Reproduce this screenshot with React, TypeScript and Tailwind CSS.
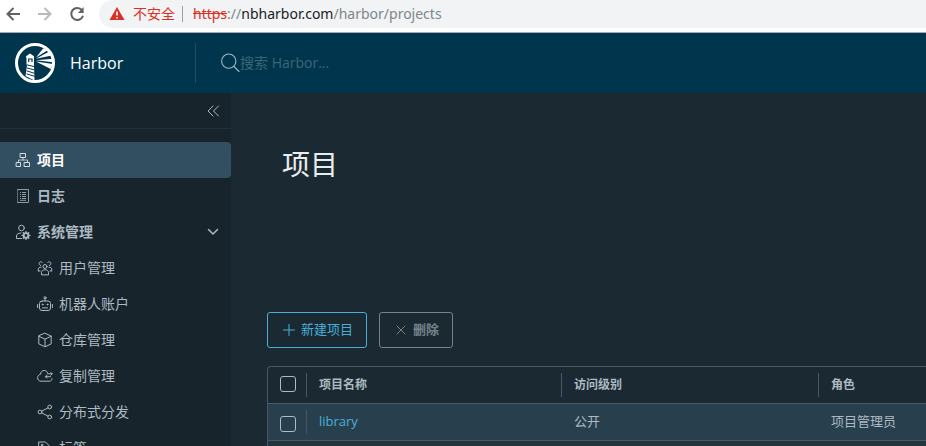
import { useState, type ReactNode } from "react";
import clsx from "clsx";

interface IconProps {
  className?: string;
  children?: ReactNode;
}

const Icon = ({ className, children }: IconProps) => (
  <svg
    viewBox="0 0 16 16"
    fill="none"
    stroke="currentColor"
    strokeLinecap="round"
    strokeLinejoin="round"
    className={clsx("shrink-0", className)}
    aria-hidden="true"
  >
    {children}
  </svg>
);

const ProjectsIcon = () => (
  <Icon className="w-4 h-4">
    <rect x="5.5" y="1.5" width="5" height="4" />
    <rect x="1.5" y="10.5" width="4" height="4" />
    <rect x="9.5" y="10.5" width="5" height="4" />
    <path d="M8 5.5v2.5M3.5 10.5V8h9v2.5" strokeWidth="0.8" />
  </Icon>
);

const LogsIcon = () => (
  <Icon className="w-4 h-4 opacity-80">
    <rect x="2.5" y="1.5" width="11" height="13" />
    <path
      d="M5 4.500h1M5 6.500h1M5 8.500h1M5 10.500h1M7 4.500h4M7 6.500h4M7 8.500h4M7 10.500h4M5 12.300h6"
      strokeLinecap="butt"
    />
  </Icon>
);

const AdminIcon = () => (
  <Icon className="w-4 h-4">
    <circle cx="6.5" cy="4" r="2.8" />
    <path d="M6.5 14.5h-5V12c0-2 2-3 4.500-3" />
    <circle cx="11" cy="11.5" r="2.3" strokeWidth="1.8" />
    <path
      d="M11 7.600v1M11 14.400v1M7.100 11.500h1M13.900 11.500h1M8.300 8.800l.7.700M13 13.500l.7.700M8.300 14.200l.7-.7M13 9.500l.7-.7"
      strokeWidth="1.4"
    />
  </Icon>
);

const UsersIcon = () => (
  <Icon className="w-4 h-4">
    <circle cx="8" cy="6.5" r="2" />
    <path d="M4.500 14.500v-2.200c0-1.600 1.500-2.500 3.500-2.500s3.500.9 3.500 2.500v2.200z" />
    <path d="M5.200 2.200a1.900 1.900 0 1 0-1.600 3.300M1.300 10.800V8.900c0-1 1-1.800 2.800-1.700M10.800 2.200a1.900 1.900 0 1 1 1.600 3.300M14.700 10.800V8.900c0-1-1-1.800-2.800-1.700M3 11H1.500M13 11h1.500" />
  </Icon>
);

const RobotIcon = () => (
  <Icon className="w-4 h-4">
    <rect x="2.5" y="5" width="11" height="9.5" rx="2.5" />
    <path d="M8 5V3M.6 8.500v3M15.400 8.500v3M5.500 11.900h5" />
    <circle cx="8" cy="1.8" r="1.1" />
    <circle cx="5.6" cy="8.5" r=".5" />
    <circle cx="10.4" cy="8.5" r=".5" />
  </Icon>
);

const RegistryIcon = () => (
  <Icon className="w-4 h-4">
    <path d="M8 1.300l6.200 2.800v7.800L8 14.800l-6.200-2.900V4.100zM1.800 4.200L8 7.200l6.200-3M8 7.200v7.500" />
  </Icon>
);

const ReplicationIcon = () => (
  <Icon className="w-4 h-4">
    <path d="M10.500 4.600C9.800 3.100 8.600 2.500 7.200 2.500 5.100 2.500 3.600 4 3.500 6.300 1.700 6.700.6 8 .6 9.700c0 2 1.400 3.500 3.400 3.500h8.500c1.700 0 2.500-1.200 2.500-2.500" />
    <path d="M10.500 5.800h4.700M13.800 4.400l1.400 1.400-1.400 1.400M13.500 8.700h-5M9.900 7.300L8.500 8.700l1.400 1.400" />
  </Icon>
);

const ShareIcon = () => (
  <Icon className="w-4 h-4">
    <circle cx="3" cy="8" r="1.9" />
    <circle cx="12.7" cy="3" r="1.9" />
    <circle cx="12.7" cy="13" r="1.9" />
    <path d="M4.700 7.100L11 3.900M4.700 8.900L11 12.100" />
  </Icon>
);

const TagIcon = () => (
  <Icon className="w-4 h-4">
    <path d="M2 2h6.500l6 6.200-5.800 6L2 8z" />
    <circle cx="5" cy="5" r=".8" />
  </Icon>
);

const HarborLogo = () => (
  <svg viewBox="0 0 40 40" className="w-10 h-10 shrink-0" role="img" aria-label="Harbor">
    <circle cx="20" cy="20" r="18.5" fill="none" stroke="#fff" strokeWidth="3" />
    <g fill="#fff">
      <path d="M15 10.500l4 2.700v1.300h-8v-1.300z" />
      <path d="M11.500 14h7.500v8h-7.500z" />
      <path d="M12 22h7l.500 15.500-9-4.500z" />
      <path d="M21 14.500L28.300 5.300l4 2.200z" />
      <path d="M21 15.800L34.300 8.500l2.400 4z" />
      <path d="M21 17.200L38 15.800v3.400z" />
      <path d="M21 18.500L37.700 21l-2 5z" />
    </g>
    <g stroke="#00364d" fill="none">
      <path d="M13.700 19v-3h3.300v3" strokeWidth="1.2" />
      <path d="M11.500 21.800l8 1.800M11.500 24.800l8 2.200M11.500 27.800l8 2.500M11.500 30.800l8 2.500" strokeWidth="1" />
    </g>
  </svg>
);

const BrowserBar = () => (
  <div className="flex items-start h-[33px] shrink-0 bg-white border-b border-[#a9a9ad] pl-[5px]">
    <div className="flex items-center gap-4 h-7 text-[#5f6368]">
      <button aria-label="后退">
        <Icon className="w-4 h-4">
          <path d="M15 8H3M8.500 2L2.500 8l6 6" strokeWidth="2" strokeLinecap="butt" strokeLinejoin="miter" />
        </Icon>
      </button>
      <button aria-label="前进" className="text-[#bababa]">
        <Icon className="w-4 h-4">
          <path d="M1 8h12M7.500 2l6 6-6 6" strokeWidth="2" strokeLinecap="butt" strokeLinejoin="miter" />
        </Icon>
      </button>
      <button aria-label="重新加载">
        <Icon className="w-4 h-4">
          <path d="M13 4.200A6 6 0 1 0 14 9.700" strokeWidth="2" strokeLinecap="butt" />
          <path d="M14.600 1v6H8.800z" fill="currentColor" stroke="none" />
        </Icon>
      </button>
    </div>
    <div className="flex flex-1 items-center h-7 ml-3.5 pl-2.5 rounded-l-full bg-[#f1f3f4] text-sm text-[#80868b] font-['Noto_Sans','Noto_Sans_CJK_SC',sans-serif]">
      <svg viewBox="0 0 16 16" className="w-4 h-4 shrink-0" aria-hidden="true">
        <path d="M8 1l7.500 13H.5z" fill="#d93025" />
        <path d="M8 5.500v4M8 11v1.600" stroke="#fff" strokeWidth="1.6" />
      </svg>
      <span className="ml-2 text-[#d93025]">不安全</span>
      <span className="w-px h-4 ml-[7px] mr-2.5 bg-[#9aa0a6]" />
      <span>
        <span className="text-[#d93025] line-through">https</span>://
        <span className="text-[#202124]">nbharbor.com</span>/harbor/projects
      </span>
    </div>
  </div>
);

const Header = () => (
  <header className="flex items-center h-15 shrink-0 bg-[#00364d]">
    <a href="#home" className="flex items-center gap-[15px] w-[195px] pl-[15px] text-white">
      <HarborLogo />
      <span className="text-base font-['Open_Sans',sans-serif]">Harbor</span>
    </a>
    <label className="flex flex-1 items-center h-10 pl-6 border-l border-[#1f4f63] text-[#a3b8c2]">
      <Icon className="w-5 h-5">
        <circle cx="7" cy="6.5" r="5.7" strokeWidth="0.9" />
        <path d="M11.200 10.800l4 4" strokeWidth="0.9" />
      </Icon>
      <input
        type="search"
        aria-label="搜索"
        placeholder="搜索 Harbor..."
        className="flex-1 text-sm bg-transparent outline-none placeholder:text-[#3d6578]"
      />
    </label>
  </header>
);

const adminItems = [
  { label: "用户管理", icon: <UsersIcon /> },
  { label: "机器人账户", icon: <RobotIcon /> },
  { label: "仓库管理", icon: <RegistryIcon /> },
  { label: "复制管理", icon: <ReplicationIcon /> },
  { label: "分布式分发", icon: <ShareIcon /> },
  { label: "标签", icon: <TagIcon /> },
];

const Sidebar = () => {
  const [isAdminOpen, setIsAdminOpen] = useState(true);

  return (
    <aside className="w-[231px] shrink-0 bg-[#17242b] text-sm">
      <div className="flex items-center justify-end h-9 pr-2.5 border-b border-[#21323b]">
        <button aria-label="收起菜单">
          <Icon className="w-4 h-4">
            <path d="M8 3L3 8l5 5M13.500 3l-5 5 5 5" />
          </Icon>
        </button>
      </div>
      <nav className="pt-[13px]">
        <a href="#projects" className="flex items-center gap-1.5 h-9 pl-[15px] rounded-r bg-[#324f62] text-white font-bold">
          <span className="text-[#d5dfe5]"><ProjectsIcon /></span>
          项目
        </a>
        <a href="#logs" className="flex items-center gap-1.5 h-9 pl-[15px] font-bold">
          <LogsIcon />
          日志
        </a>
        <button
          className="flex items-center gap-1.5 w-full h-9 pl-[15px] pr-2.5 font-bold"
          onClick={() => setIsAdminOpen(!isAdminOpen)}
          aria-expanded={isAdminOpen}
        >
          <AdminIcon />
          系统管理
          <Icon className="w-4 h-4 ml-auto">
            <path d="M3.500 5.500L8 10l4.500-4.500" strokeWidth="1.5" />
          </Icon>
        </button>
        {isAdminOpen &&
          adminItems.map((item) => (
            <a key={item.label} href="#admin" className="flex items-center gap-1.5 h-9 pl-[37px]">
              {item.icon}
              {item.label}
            </a>
          ))}
      </nav>
    </aside>
  );
};

const Checkbox = ({ label }: { label: string }) => (
  <input
    type="checkbox"
    aria-label={label}
    className="block w-4 h-4 mx-auto appearance-none rounded-[3px] border border-[#acbac3] checked:bg-[#4aaed9]"
  />
);

const ProjectsTable = () => (
  <table className="w-full mt-[18px] table-fixed border-separate border-spacing-0 border-l border-t border-[#495865] rounded-tl text-[13px] text-left">
    <colgroup>
      <col className="w-[38px]" />
      <col className="w-[255px]" />
      <col className="w-[257px]" />
      <col />
    </colgroup>
    <thead>
      <tr className="h-[37px]">
        <th className="border-b border-[#495865] pl-0.5 pb-0.5"><Checkbox label="全选" /></th>
        {["项目名称", "访问级别", "角色"].map((title) => (
          <th key={title} className="border-b border-[#495865] text-xs font-bold">
            <div className="flex items-center h-6 pl-3 border-l border-[#495865]">{title}</div>
          </th>
        ))}
      </tr>
    </thead>
    <tbody>
      <tr className="h-[37px] bg-[#28404d]">
        <td className="border-b border-[#495865] pl-0.5 pt-1"><Checkbox label="library" /></td>
        <td className="border-b border-[#495865]">
          <div className="flex items-center h-6 pl-3 border-l border-[#495865]">
            <a href="#library" className="text-[#4aaed9] font-['Open_Sans',sans-serif]">library</a>
          </div>
        </td>
        <td className="border-b border-[#495865] pl-[13px]">公开</td>
        <td className="border-b border-[#495865] pl-[13px]">项目管理员</td>
      </tr>
    </tbody>
    <tfoot>
      <tr className="h-9 bg-[#22343c]">
        <td colSpan={4} />
      </tr>
    </tfoot>
  </table>
);

const App = () => (
  <div className="flex flex-col h-screen overflow-hidden bg-[#1b2a32] text-[#acbac3] font-['Open_Sans','Noto_Sans_CJK_SC',sans-serif]">
    <BrowserBar />
    <Header />
    <div className="flex flex-1 min-h-0">
      <Sidebar />
      <main className="flex-1 min-w-0 pl-9 pt-13">
        <h1 className="pl-[15px] text-[28px] leading-[38px] font-normal text-[#eaedf0]">项目</h1>
        <div className="flex gap-3 mt-[129px] text-[13px]">
          <button className="flex items-center gap-1 h-9 px-[13px] rounded-[3px] border border-[#4aaed9] text-[#4aaed9]">
            <Icon className="w-4 h-4">
              <path d="M8 2.500v11M2.500 8h11" />
            </Icon>
            新建项目
          </button>
          <button disabled className="flex items-center gap-1 h-9 px-[13px] rounded-[3px] border border-[#74828a] text-[#74828a] font-bold">
            <Icon className="w-4 h-4">
              <path d="M4 4l8 8M12 4l-8 8" />
            </Icon>
            删除
          </button>
        </div>
        <ProjectsTable />
      </main>
    </div>
  </div>
);

export default App;
